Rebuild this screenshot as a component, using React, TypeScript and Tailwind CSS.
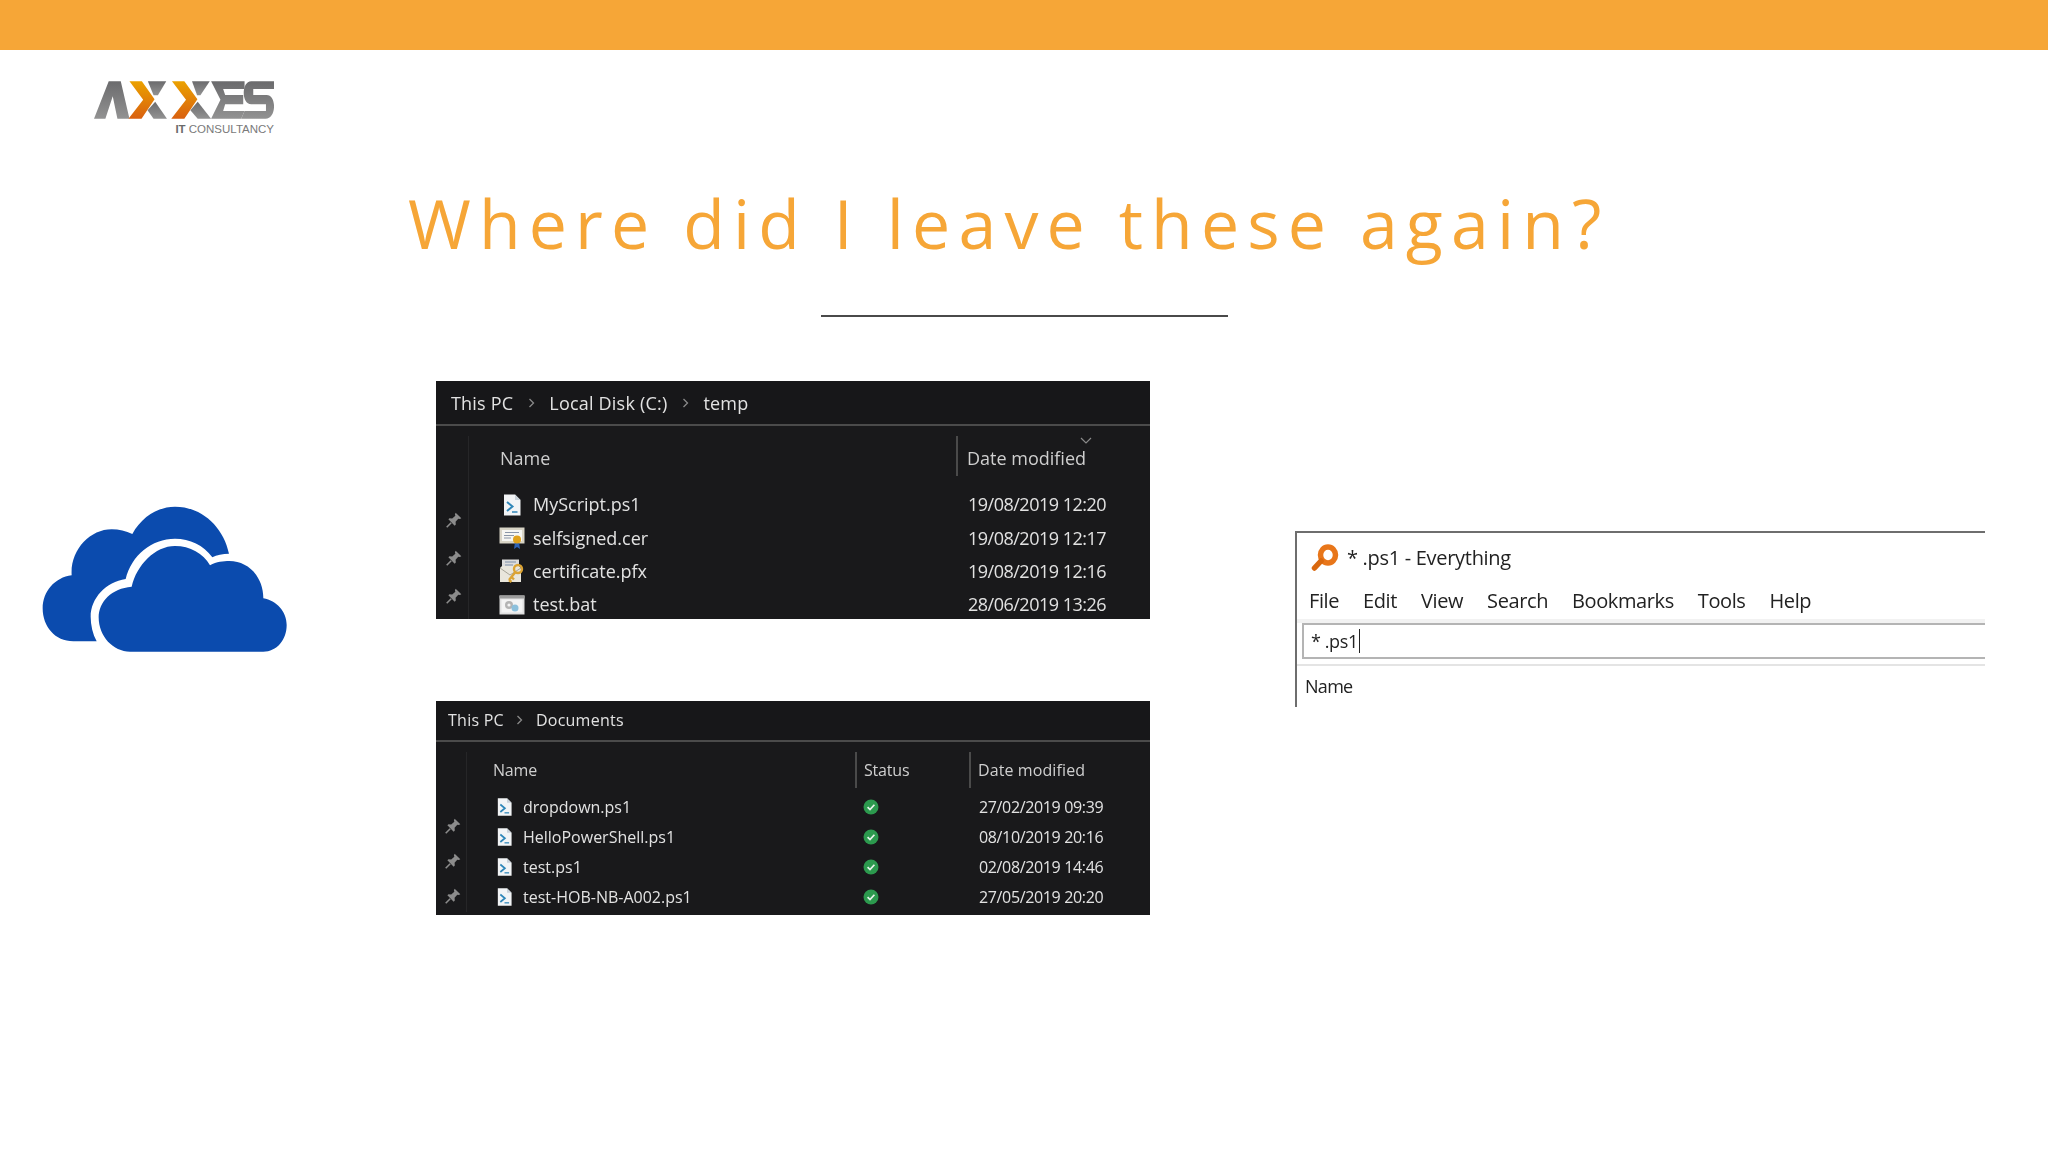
import type { ReactNode } from 'react';

function AxxesLogo() {
  return (
    <svg width="180" height="38" viewBox="282 243 538 112" aria-label="AXXES" className="shrink-0">
      <defs>
        <linearGradient id="grayFill" x1="0" y1="0" x2="0" y2="1">
          <stop offset="0" stopColor="#6b6b6d" />
          <stop offset="1" stopColor="#929292" />
        </linearGradient>
        <linearGradient id="orangeFill" x1="0" y1="0" x2="0" y2="1">
          <stop offset="0" stopColor="#eba200" />
          <stop offset="1" stopColor="#d9600f" />
        </linearGradient>
      </defs>
      <g fill="url(#grayFill)">
        <polygon points="282,355 326,243 362,243 388,355 352,355 338,288 316,355" />
        <polygon points="443,243 498,243 473,285 460,285" />
        <polygon points="465,304 500,355 460,355 442,330" />
        <polygon points="575,243 628,243 600,285 590,285" />
        <polygon points="592,304 632,355 592,355 570,330" />
        <polygon points="632,243 732,243 732,266 668,266 674,284 728,284 728,312 674,312 668,332 732,332 722,355 632,355 660,298" />
        <path d="M752 243 H820 V266 H758 V284 H798 C828 284 828 355 795 355 H722 L732 332 H796 V312 H752 C722 312 722 243 752 243 Z" />
      </g>
      <g fill="url(#orangeFill)">
        <polygon points="388,243 425,243 463,297 424,355 385,355 429,298" />
        <polygon points="515,243 552,243 591,297 552,355 513,355 557,298" />
      </g>
    </svg>
  );
}

function CloudLogo() {
  return (
    <svg width="290" height="190" viewBox="0 0 870 570" className="shrink-0">
      <g fill="#0b4bae">
        <path d="M230 484 L160 484 C105 484 68 440 68 385 C68 335 105 292 155 286 C150 210 210 148 275 148 C297 148 318 153 337 162 C365 110 415 80 465 80 C545 80 610 140 627 221 C608 221 590 225 577 232 C550 195 510 176 465 176 C395 176 335 225 317 297 C258 305 212 355 212 410 C212 435 218 462 230 484 Z" />
        <path d="M330 515 C280 515 236 470 236 412 C236 365 275 325 335 320 C350 255 405 198 465 198 C510 198 550 220 570 256 C590 245 610 243 628 243 C685 243 730 290 730 355 C770 362 800 395 800 435 C800 480 770 515 730 515 Z" />
      </g>
    </svg>
  );
}

function PinIcon() {
  return (
    <svg width="18" height="18" viewBox="0 0 16 16" className="shrink-0">
      <path d="M9.5 1.5 L14.5 6.5 L13.2 7.2 L11.8 6.8 L9.4 9.6 L9.6 12 L8.6 13 L3 7.4 L4 6.4 L6.4 6.6 L9.2 4.2 L8.8 2.8 Z" fill="#8c8c8c" />
      <path d="M5.5 10.5 L1.5 14.5" stroke="#8c8c8c" strokeWidth="1.4" />
    </svg>
  );
}

function ScriptIcon({ w = 18, h = 22 }: { w?: number; h?: number }) {
  return (
    <svg width={w} height={h} viewBox="0 0 18 22">
      <path d="M1 0.5 H12 L17.5 6 V21.5 H1 Z" fill="#f2f4f6" />
      <path d="M12 0.5 V6 H17.5 Z" fill="#c9d2da" />
      <path d="M4 8 L9.5 12.5 L4 17" fill="none" stroke="#2f86b8" strokeWidth="2" />
      <path d="M9 18 H14.5" stroke="#2f86b8" strokeWidth="1.5" />
    </svg>
  );
}

function CertIcon() {
  return (
    <svg width="26" height="22" viewBox="0 0 26 22">
      <rect x="0.5" y="0.5" width="25" height="16" fill="#d8d4c6" />
      <rect x="3" y="3" width="20" height="11" fill="#f6f6f2" />
      <path d="M6 5.5 H20 M5 8.5 H15 M5 11 H12" stroke="#8a96a8" strokeWidth="1" />
      <path d="M16 15 L15 22 L18 20 L21 22 L20 15 Z" fill="#2d62b5" />
      <circle cx="18" cy="12.5" r="4" fill="#e0a21a" />
    </svg>
  );
}

function PfxIcon() {
  return (
    <svg width="26" height="24" viewBox="0 0 26 24">
      <path d="M3 0.5 H20 V11 H3 Z" fill="#dcdcdc" />
      <path d="M6 3 H17 M6 6 H14" stroke="#7d8ea6" strokeWidth="1.2" />
      <path d="M1 9 L3 7 H20 L22 9 V23 H1 Z" fill="#e9e6dc" />
      <path d="M1 9 L11 16 L22 9" fill="none" stroke="#a8a598" strokeWidth="1" />
      <circle cx="19" cy="10" r="4" fill="none" stroke="#dba333" strokeWidth="2.4" />
      <path d="M16.5 13 L10 21 M12.5 18 L15 20.5 M10 21 L12.5 23" stroke="#dba333" strokeWidth="2.4" />
    </svg>
  );
}

function BatIcon() {
  return (
    <svg width="26" height="20" viewBox="0 0 26 20">
      <rect x="0.5" y="0.5" width="25" height="19" fill="#e0e0e0" />
      <rect x="0.5" y="0.5" width="25" height="3" fill="#9c9c9c" />
      <rect x="2.5" y="4.5" width="21" height="13" fill="#f4f4f4" />
      <circle cx="10" cy="10" r="4" fill="#b4b4b4" />
      <circle cx="10" cy="10" r="1.6" fill="#f4f4f4" />
      <circle cx="16" cy="13" r="3.5" fill="#8cc0dc" />
    </svg>
  );
}

function StatusDot() {
  return (
    <svg width="16" height="16" viewBox="0 0 16 16">
      <circle cx="8" cy="8" r="7.5" fill="#2c9a4e" />
      <path d="M4.6 8.2 L7 10.6 L11.4 5.8" fill="none" stroke="#e6f4ea" strokeWidth="1.7" />
    </svg>
  );
}

function Crumbs({ items, size, gap }: { items: string[]; size: string; gap: string }) {
  return (
    <div className={`flex items-center ${size} ${gap}`}>
      {items.map((item, i) => (
        <div key={item} className={`flex items-center ${gap}`}>
          {i > 0 && (
            <svg width="7" height="10" viewBox="0 0 7 10">
              <path d="M1.5 1 L5.5 5 L1.5 9" fill="none" stroke="#8a8a8a" strokeWidth="1.3" />
            </svg>
          )}
          <span>{item}</span>
        </div>
      ))}
    </div>
  );
}

const tempFiles: { name: string; date: string; icon: ReactNode }[] = [
  { name: 'MyScript.ps1', date: '19/08/2019 12:20', icon: <ScriptIcon /> },
  { name: 'selfsigned.cer', date: '19/08/2019 12:17', icon: <CertIcon /> },
  { name: 'certificate.pfx', date: '19/08/2019 12:16', icon: <PfxIcon /> },
  { name: 'test.bat', date: '28/06/2019 13:26', icon: <BatIcon /> },
];

const docFiles = [
  { name: 'dropdown.ps1', date: '27/02/2019 09:39' },
  { name: 'HelloPowerShell.ps1', date: '08/10/2019 20:16' },
  { name: 'test.ps1', date: '02/08/2019 14:46' },
  { name: 'test-HOB-NB-A002.ps1', date: '27/05/2019 20:20' },
];

function TempPanel() {
  return (
    <div className="h-[238px] w-[714px] overflow-hidden bg-[#19191b] text-[#e2e2e2] blur-[0.5px]">
      <div className="flex h-[45px] items-center border-b-2 border-[#4b4b4b] bg-[#171719] pl-[15px] pt-[1px]">
        <Crumbs items={['This PC', 'Local Disk (C:)', 'temp']} size="text-[18px] tracking-[0.2px]" gap="gap-[14.5px]" />
      </div>
      <div className="flex">
        <div className="flex w-[32px] flex-col items-center gap-[20px] pl-[4px] pt-[85px]">
          <PinIcon />
          <PinIcon />
          <PinIcon />
        </div>
        <div className="mt-[10px] flex-1 border-l border-[#262628]">
          <div className="flex h-[40px] items-center pt-[4px] text-[18px] tracking-[0px] text-[#cfcfcf]">
            <span className="w-[487px] pl-[31px]">Name</span>
            <div className="relative -mt-[4px] h-[40px] border-l-2 border-[#4a4a4a] pl-[9px] pt-[9px]">
              Date modified
              <svg width="12" height="7" viewBox="0 0 12 7" className="absolute left-[122px] top-[1px]">
                <path d="M1 1 L6 6 L11 1" fill="none" stroke="#8a8a8a" strokeWidth="1.2" />
              </svg>
            </div>
          </div>
          <div className="pt-[12px]">
            {tempFiles.map((f) => (
              <div key={f.name} className="flex h-[33.4px] items-center text-[18px]">
                <div className="flex w-[64px] justify-center pl-[21px]">{f.icon}</div>
                <span className="w-[435px]">{f.name}</span>
                <span className="tracking-[-0.5px]">{f.date}</span>
              </div>
            ))}
          </div>
        </div>
      </div>
    </div>
  );
}

function DocsPanel() {
  return (
    <div className="mt-[82px] h-[214px] w-[714px] overflow-hidden bg-[#19191b] text-[#e2e2e2] blur-[0.5px]">
      <div className="flex h-[41px] items-center border-b-2 border-[#4b4b4b] bg-[#171719] pb-[2px] pl-[12px]">
        <Crumbs items={['This PC', 'Documents']} size="text-[16px] tracking-[0.25px]" gap="gap-[12.5px]" />
      </div>
      <div className="flex">
        <div className="flex w-[30px] flex-col items-center gap-[17px] pl-[3px] pt-[75px]">
          <PinIcon />
          <PinIcon />
          <PinIcon />
        </div>
        <div className="mt-[10px] flex-1 border-l border-[#262628]">
          <div className="flex h-[36px] items-center text-[16px] text-[#cfcfcf]">
            <span className="w-[388px] pl-[26px] tracking-[-0.2px]">Name</span>
            <span className="flex h-full w-[114px] items-center border-l-2 border-[#4a4a4a] pl-[7px] tracking-[-0.2px]">Status</span>
            <span className="flex h-full items-center border-l-2 border-[#4a4a4a] pl-[7px] tracking-[0.1px]">Date modified</span>
          </div>
          <div className="pt-[4px]">
            {docFiles.map((f) => (
              <div key={f.name} className="flex h-[30px] items-center text-[16px]">
                <div className="flex w-[56px] justify-center pl-[18px]">
                  <ScriptIcon w={15} h={20} />
                </div>
                <span className="w-[340px] tracking-[0px]">{f.name}</span>
                <div className="flex w-[116px]">
                  <StatusDot />
                </div>
                <span className="tracking-[-0.35px]">{f.date}</span>
              </div>
            ))}
          </div>
        </div>
      </div>
    </div>
  );
}

function EverythingWindow() {
  const menu = ['File', 'Edit', 'View', 'Search', 'Bookmarks', 'Tools', 'Help'];
  return (
    <div className="ml-[145px] mt-[150px] h-[176px] w-[690px] border-l-2 border-t-2 border-[#6e6e6e] bg-white text-[#222] blur-[0.5px]">
      <div className="flex h-[50px] items-center gap-[8px] pl-[14px] text-[20px] tracking-[-0.3px]">
        <svg width="28" height="28" viewBox="0 0 28 28">
          <ellipse cx="17" cy="11" rx="7.5" ry="8" fill="#fff" stroke="#e8761a" strokeWidth="5.5" />
          <path d="M10 17 L3.5 24" stroke="#d9680f" strokeWidth="5.5" strokeLinecap="round" />
        </svg>
        <span>* .ps1 - Everything</span>
      </div>
      <div className="flex h-[36px] items-center gap-[24px] pl-[12px] text-[20px] tracking-[-0.4px]">
        {menu.map((m) => (
          <span key={m}>{m}</span>
        ))}
      </div>
      <div className="h-[4px] bg-[#f2f2f2]" />
      <div className="ml-[5px] flex h-[36px] items-center border-y-2 border-l-2 border-[#b4b4b4] pl-[7px] text-[18px] tracking-[-0.4px]">
        <span className="border-r border-[#222] pr-[1px] leading-[24px]">* .ps1</span>
      </div>
      <div className="mt-[5px] h-[2px] bg-[#e4e4e4]" />
      <div className="pl-[8px] pt-[7px] text-[18px] tracking-[-0.7px]">Name</div>
    </div>
  );
}

export default function App() {
  return (
    <div className="flex h-[1152px] w-[2048px] flex-col overflow-hidden bg-white font-['Open_Sans',sans-serif]">
      <div className="h-[50px] w-full bg-[#f6a637]" />

      <div className="ml-[94px] mt-[31px] flex h-[56px] w-[180px] flex-col">
        <AxxesLogo />
        <div className="mt-[4px] text-right font-['Liberation_Sans',sans-serif] text-[11.5px] leading-[13px] text-[#7a7a7a]">
          <span className="font-bold text-[#6a6a6a]">IT</span> CONSULTANCY
        </div>
      </div>

      <h1 className="ml-[408px] mt-[36px] h-[100px] whitespace-nowrap text-[68px] font-normal leading-[100px] tracking-[8.15px] text-[#f6a637]">
        Where did I leave these again?
      </h1>

      <div className="ml-[821px] mt-[42px] h-[2px] w-[407px] bg-[#4a4a4a]" />

      <div className="ml-[20px] mt-[64px] flex items-start">
        <div className="mt-[99px]">
          <CloudLogo />
        </div>
        <div className="ml-[126px] flex flex-col">
          <TempPanel />
          <DocsPanel />
        </div>
        <EverythingWindow />
      </div>
    </div>
  );
}
